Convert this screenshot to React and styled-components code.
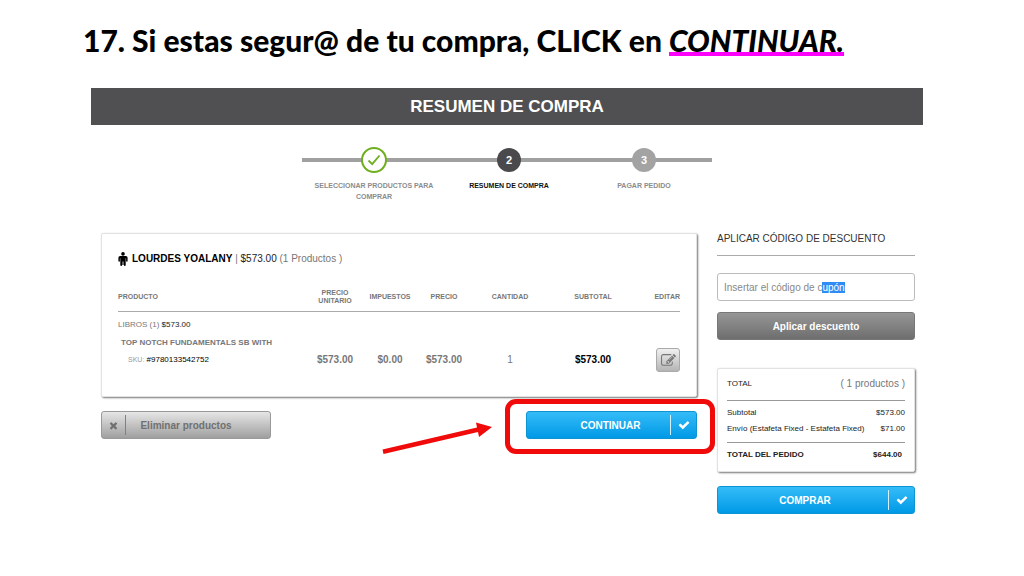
import React, { useEffect, useRef } from "react";
import styled, { createGlobalStyle, css } from "styled-components";

const GlobalStyle = createGlobalStyle`
  * {
    box-sizing: border-box;
  }
  body {
    margin: 0;
    background: #fff;
    font-family: "Liberation Sans", Arial, sans-serif;
    color: #000;
  }
`;

const Slide = styled.main`
  padding: 18px 101px 20px 91px;
`;

const SlideTitle = styled.h1`
  margin: 0 -8px 26px;
  font-family: Lato, sans-serif;
  font-size: 30px;
  line-height: 44px;
  font-weight: 900;
  white-space: nowrap;
`;

const Marked = styled.em`
  text-decoration: underline #ff00ff 4px;
  text-underline-offset: 0;
  text-decoration-skip-ink: none;
`;

const PageHeader = styled.h2`
  margin: 0 0 22px;
  background: #505052;
  color: #fff;
  font-size: 17px;
  line-height: 37px;
  font-weight: 700;
  text-align: center;
`;

const Stepper = styled.ol`
  display: grid;
  grid-template-columns: repeat(3, 135px);
  justify-content: center;
  width: 410px;
  height: 86px;
  margin: 0 auto;
  padding: 0 0 0 4px;
  list-style: none;
  background: linear-gradient(#a0a0a0, #a0a0a0) 0 11px / 100% 4px no-repeat;
`;

const Step = styled.li`
  display: flex;
  flex-direction: column;
  align-items: center;
  gap: 7px;
  font-size: 7px;
  line-height: 11px;
  font-weight: 700;
  text-align: center;
  color: ${(props) => (props.$current ? "#111" : "#8c8c8c")};
`;

const StepMark = styled.span`
  display: flex;
  align-items: center;
  justify-content: center;
  width: 26px;
  height: 26px;
  border: 1px solid transparent;
  border-radius: 50%;
  background: ${(props) => (props.$current ? "#4a4a4c" : "#a3a3a3")};
  background-clip: padding-box;
  color: #fff;
  font-size: 11px;

  ${(props) =>
    props.$done &&
    css`
      border: 2px solid #6fae1c;
      background: #fff;
      color: #6fae1c;
    `}
`;

const StepLabel = styled.span`
  width: 120px;
`;

const Columns = styled.div`
  display: grid;
  grid-template-columns: 1fr 198px;
  gap: 20px;
  align-items: start;
  padding: 0 8px 0 10px;
`;

const Card = styled.section`
  border: 1px solid #e2e2e2;
  border-radius: 2px;
  background: #fff;
  box-shadow: 1px 1px 2px #777;
`;

const OrderCard = styled(Card)`
  padding: 16px 16px 24px;
  margin-bottom: 14px;
`;

const Student = styled.div`
  display: flex;
  align-items: center;
  gap: 4px;
  margin-bottom: 16px;
  font-size: 10px;
  line-height: 18px;
  color: #777;

  svg {
    color: #000;
  }
  strong {
    color: #000;
  }
`;

const Amount = styled.span`
  color: #222;
`;

const OrderTable = styled.table`
  width: 100%;
  table-layout: fixed;
  border-collapse: collapse;
  font-size: 10px;
  color: #777;
`;

const HeadCell = styled.th`
  width: ${(props) => props.$width};
  height: 27px;
  padding: 0 0 1px;
  border-bottom: 1px solid #aaa;
  font-size: 7px;
  line-height: 8px;
  font-weight: 700;
  text-align: ${(props) => props.$align || "center"};
`;

const Cell = styled.td`
  height: ${(props) => props.$height || "24px"};
  padding: 0 0 0 ${(props) => props.$indent || "0"};
  line-height: 10px;
  text-align: ${(props) => props.$align || "center"};
  font-size: ${(props) => props.$size || "10px"};
  font-weight: ${(props) => (props.$bold ? 700 : 400)};
  color: ${(props) => (props.$dark ? "#000" : "inherit")};
`;

const EditButton = styled.button`
  display: inline-flex;
  align-items: center;
  justify-content: center;
  width: 24px;
  height: 24px;
  padding: 0;
  border: 1px solid #aaa;
  border-radius: 3px;
  background: linear-gradient(#f0f0f0, #b4b4b4);
  color: #777;
  vertical-align: top;
`;

const Sku = styled.small`
  font-size: 7px;
  color: #999;
`;

const Actions = styled.div`
  display: flex;
  align-items: flex-start;
`;

const Button = styled.button`
  display: flex;
  align-items: center;
  height: 28px;
  width: ${(props) => props.$width || "100%"};
  padding: 0;
  border: 1px solid #0d94d2;
  border-radius: 3px;
  background: linear-gradient(#35bcf8, #0099e6);
  color: #fff;
  font-family: inherit;
  font-size: 10px;
  font-weight: 700;
`;

const GrayButton = styled(Button)`
  border-color: #999;
  background: linear-gradient(#e6e6e6, #9f9f9f);
  color: #707070;
`;

const DarkButton = styled(Button)`
  border-color: #777;
  background: linear-gradient(#969696, #6e6e6e);
`;

const ButtonText = styled.span`
  flex: 1;
  padding: ${(props) => props.$pad || "0"};
  text-align: center;
`;

const ButtonIcon = styled.span`
  display: flex;
  align-items: center;
  justify-content: center;
  width: ${(props) => (props.$left ? "24px" : "26px")};
  height: 20px;
  border-left: ${(props) => (props.$left ? "0" : "1px solid #d5f0fd")};
  border-right: ${(props) => (props.$left ? "1px solid #808080" : "0")};
`;

const Pointer = styled.svg`
  width: 112px;
  height: 36px;
  margin: 10px 32px 0 auto;
`;

const Highlight = styled.div`
  position: relative;

  &::after {
    content: "";
    position: absolute;
    inset: -12px -18px -15px -21px;
    border: 5px solid #f00a0a;
    border-radius: 11px;
    pointer-events: none;
  }
`;

const CouponForm = styled.form`
  display: flex;
  flex-direction: column;
  margin-bottom: 28px;
`;

const CouponLabel = styled.label`
  margin-bottom: 17px;
  padding-bottom: 10px;
  border-bottom: 1px solid #aaa;
  font-size: 10px;
  line-height: 12px;
  color: #333;
`;

const CouponInput = styled.input`
  height: 28px;
  margin-bottom: 11px;
  padding: 0 6px;
  border: 1px solid #bbb;
  border-radius: 3px;
  outline: none;
  font-family: inherit;
  font-size: 10px;
  color: #888;
  caret-color: transparent;

  &::selection {
    background: #2f8cf5;
    color: #fff;
  }
`;

const TotalCard = styled(Card)`
  margin-bottom: 14px;
  padding: 6px 9px 8px;
`;

const TotalGroup = styled.dl`
  margin: 0;
  padding: ${(props) => props.$pad || "4px 0 5px"};
  font-weight: ${(props) => (props.$bold ? 700 : 400)};

  & + & {
    border-top: 1px solid #999;
  }
`;

const TotalRow = styled.div`
  display: flex;
  justify-content: space-between;
  font-size: 8px;
  line-height: 16px;
  color: #222;
  white-space: nowrap;

  dd {
    margin: 0;
  }
`;

const Count = styled.dd`
  font-size: 10px;
  color: #777;
`;

const Person = () => (
  <svg width="10" height="14" viewBox="0 0 10 14" fill="currentColor">
    <circle cx="5" cy="1.9" r="1.8" />
    <path d="M2.2 4h5.6Q9.6 4 9.6 5.8V9a.75.75 0 0 1-1.5 0V6.2h-.4v6.9a.9.9 0 0 1-1.8 0H5.4V9.4h-.8v3.7H4.1a.9.9 0 0 1-1.8 0V6.2h-.4V9A.75.75 0 0 1 .4 9V5.8Q.4 4 2.2 4z" />
  </svg>
);

const Check = () => (
  <svg width="12" height="12" viewBox="0 0 1792 1792" fill="currentColor">
    <path d="M1671 566q0 40-28 68l-724 724-136 136q-28 28-68 28t-68-28l-136-136-362-362q-28-28-28-68t28-68l136-136q28-28 68-28t68 28l294 295 656-657q28-28 68-28t68 28l136 136q28 28 28 68z" />
  </svg>
);

const Cross = () => (
  <svg width="11" height="11" viewBox="0 0 1792 1792" fill="currentColor">
    <path d="M1490 1322q0 40-28 68l-136 136q-28 28-68 28t-68-28l-294-294-294 294q-28 28-68 28t-68-28l-136-136q-28-28-28-68t28-68l294-294-294-294q-28-28-28-68t28-68l136-136q28-28 68-28t68 28l294 294 294-294q28-28 68-28t68 28l136 136q28 28 28 68t-28 68l-294 294 294 294q28 28 28 68z" />
  </svg>
);

const Pencil = () => (
  <svg width="15" height="15" viewBox="0 0 1792 1792" fill="currentColor">
    <path d="M888 1184l116-116-152-152-116 116v56h96v96h56zm440-720q-16-16-33 1l-350 350q-17 17-1 33t33-1l350-350q17-17 1-33zm80 594v190q0 119-84.5 203.5t-203.5 84.5h-832q-119 0-203.5-84.5t-84.5-203.5v-832q0-119 84.5-203.5t203.5-84.5h832q63 0 117 25 15 7 18 23 3 17-9 29l-49 49q-14 14-32 8-23-6-45-6h-832q-66 0-113 47t-47 113v832q0 66 47 113t113 47h832q66 0 113-47t47-113v-126q0-13 9-22l64-64q15-15 35-7t20 29zm-96-738l288 288-672 672h-288v-288zm444 132l-92 92-288-288 92-92q28-28 68-28t68 28l152 152q28 28 28 68t-28 68z" />
  </svg>
);

const StepCheck = () => (
  <svg width="14" height="14" viewBox="0 0 14 14" fill="none" stroke="currentColor">
    <path d="M1.5 7.5 5.2 11.2 12.5 2.5" strokeWidth="1.8" />
  </svg>
);

const steps = [
  { id: 1, name: "SELECCIONAR PRODUCTOS PARA COMPRAR", done: true },
  { id: 2, name: "RESUMEN DE COMPRA", current: true },
  { id: 3, name: "PAGAR PEDIDO" },
];

const columns = [
  { name: "PRODUCTO", align: "left" },
  { name: "PRECIO UNITARIO", width: "56px" },
  { name: "IMPUESTOS", width: "54px" },
  { name: "PRECIO", width: "54px" },
  { name: "CANTIDAD", width: "78px" },
  { name: "SUBTOTAL", width: "88px" },
  { name: "EDITAR", width: "43px", align: "right" },
];

function Order() {
  return (
    <OrderCard>
      <Student>
        <Person />
        <span>
          <strong>LOURDES YOALANY</strong> | <Amount>$573.00</Amount> (1
          Productos )
        </span>
      </Student>
      <OrderTable>
        <thead>
          <tr>
            {columns.map((column) => (
              <HeadCell
                key={column.name}
                $width={column.width}
                $align={column.align}
              >
                {column.name}
              </HeadCell>
            ))}
          </tr>
        </thead>
        <tbody>
          <tr>
            <Cell colSpan={7} $height="27px" $align="left" $size="8px">
              LIBROS (1) <Amount>$573.00</Amount>
            </Cell>
          </tr>
          <tr>
            <Cell
              colSpan={7}
              $height="10px"
              $align="left"
              $indent="3px"
              $size="8px"
              $bold
            >
              TOP NOTCH FUNDAMENTALS SB WITH
            </Cell>
          </tr>
          <tr>
            <Cell $align="left" $indent="10px" $size="8px" $dark>
              <Sku>SKU:</Sku> #9780133542752
            </Cell>
            <Cell $bold>$573.00</Cell>
            <Cell $bold>$0.00</Cell>
            <Cell $bold>$573.00</Cell>
            <Cell>1</Cell>
            <Cell $bold $dark>
              $573.00
            </Cell>
            <Cell $align="right">
              <EditButton type="button" aria-label="Editar">
                <Pencil />
              </EditButton>
            </Cell>
          </tr>
        </tbody>
      </OrderTable>
    </OrderCard>
  );
}

function Coupon() {
  const input = useRef(null);

  useEffect(() => {
    input.current.focus();
    input.current.setSelectionRange(23, 27);
  }, []);

  return (
    <CouponForm onSubmit={(e) => e.preventDefault()}>
      <CouponLabel htmlFor="coupon">APLICAR CÓDIGO DE DESCUENTO</CouponLabel>
      <CouponInput
        id="coupon"
        ref={input}
        defaultValue="Insertar el código de cupón"
      />
      <DarkButton type="submit">
        <ButtonText>Aplicar descuento</ButtonText>
      </DarkButton>
    </CouponForm>
  );
}

function Totals() {
  return (
    <TotalCard>
      <TotalGroup $pad="1px 0 8px">
        <TotalRow>
          <dt>TOTAL</dt>
          <Count>( 1 productos )</Count>
        </TotalRow>
      </TotalGroup>
      <TotalGroup>
        <TotalRow>
          <dt>Subtotal</dt>
          <dd>$573.00</dd>
        </TotalRow>
        <TotalRow>
          <dt>Envío (Estafeta Fixed - Estafeta Fixed)</dt>
          <dd>$71.00</dd>
        </TotalRow>
      </TotalGroup>
      <TotalGroup $bold $pad="4px 3px 0 0">
        <TotalRow>
          <dt>TOTAL DEL PEDIDO</dt>
          <dd>$644.00</dd>
        </TotalRow>
      </TotalGroup>
    </TotalCard>
  );
}

export default function App() {
  return (
    <Slide>
      <GlobalStyle />
      <SlideTitle>
        17. Si estas segur@ de tu compra, CLICK en <Marked>CONTINUAR.</Marked>
      </SlideTitle>
      <PageHeader>RESUMEN DE COMPRA</PageHeader>
      <Stepper>
        {steps.map((step) => (
          <Step key={step.id} $current={step.current}>
            <StepMark $current={step.current} $done={step.done}>
              {step.done ? <StepCheck /> : step.id}
            </StepMark>
            <StepLabel>{step.name}</StepLabel>
          </Step>
        ))}
      </Stepper>
      <Columns>
        <div>
          <Order />
          <Actions>
            <GrayButton type="button" $width="170px">
              <ButtonIcon $left>
                <Cross />
              </ButtonIcon>
              <ButtonText $pad="0 24px 0 0">Eliminar productos</ButtonText>
            </GrayButton>
            <Pointer viewBox="0 0 112 36" fill="#f00a0a">
              <path d="M.5 28.5 95 6.5 94 1.5 110 6 97 16 96 11 1.5 33Z" />
            </Pointer>
            <Highlight>
              <Button type="button" $width="171px">
                <ButtonText $pad="0 0 0 24px">CONTINUAR</ButtonText>
                <ButtonIcon>
                  <Check />
                </ButtonIcon>
              </Button>
            </Highlight>
          </Actions>
        </div>
        <aside>
          <Coupon />
          <Totals />
          <Button type="button">
            <ButtonText $pad="0 0 0 4px">COMPRAR</ButtonText>
            <ButtonIcon>
              <Check />
            </ButtonIcon>
          </Button>
        </aside>
      </Columns>
    </Slide>
  );
}
